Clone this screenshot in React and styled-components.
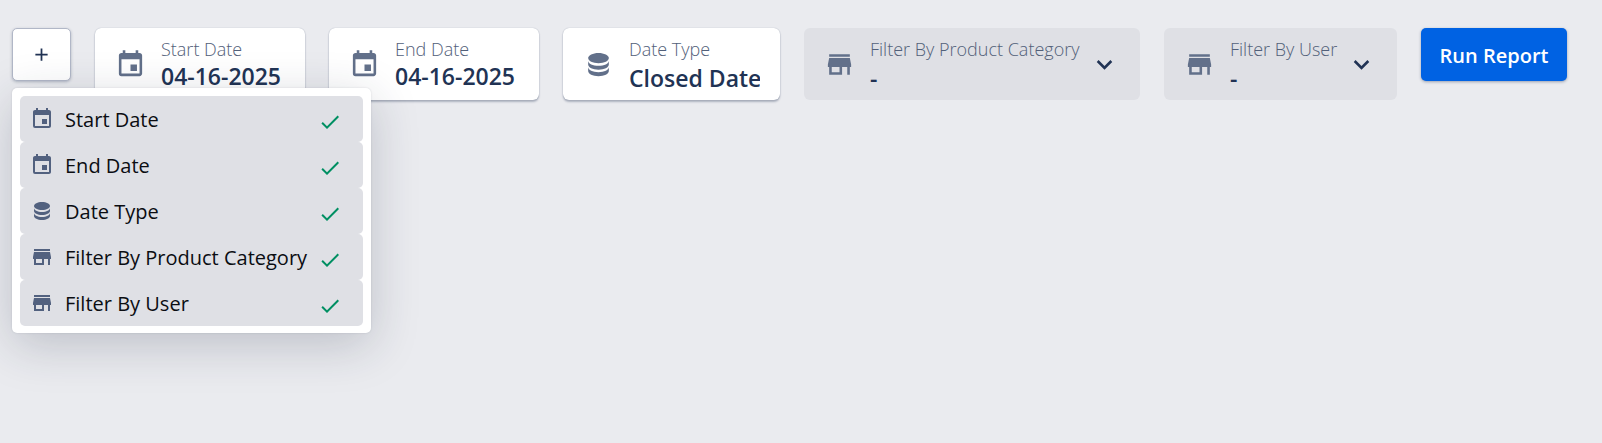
import styled, { createGlobalStyle } from "styled-components";
import { useState } from "react";
import {
  MdAdd,
  MdCheck,
  MdEvent,
  MdKeyboardArrowDown,
  MdStore,
} from "react-icons/md";

const GlobalStyle = createGlobalStyle`
  * {
    box-sizing: border-box;
  }

  body {
    margin: 0;
    background-color: #eaebef;
    font-family: "Open Sans", "Noto Sans", sans-serif;
  }

  button,
  input,
  select {
    font-family: inherit;
  }
`;

const Page = styled.main`
  min-height: 100vh;
`;

const Toolbar = styled.div`
  display: flex;
  align-items: flex-start;
  gap: 24px;
  padding: 28px 12px;
`;

const AddArea = styled.div`
  position: relative;
  flex: none;
`;

const AddButton = styled.button`
  display: flex;
  align-items: center;
  justify-content: center;
  width: 59px;
  height: 53px;
  padding: 0;
  border: 1px solid #b1b7c7;
  border-radius: 5px;
  background-color: #fff;
  box-shadow: 0 1px 3px rgba(33, 51, 84, 0.3);
  color: #213354;
  font-size: 21px;
  cursor: pointer;
`;

const Menu = styled.div`
  position: absolute;
  z-index: 1;
  top: 60px;
  left: 0;
  width: 359px;
  padding: 8px 8px 7px;
  border-radius: 5px;
  background-color: #fff;
  box-shadow: 0 12px 48px rgba(33, 40, 64, 0.22), 0 0 2px rgba(33, 40, 64, 0.15);
`;

const MenuItem = styled.button`
  display: flex;
  align-items: center;
  width: 100%;
  height: 46px;
  padding: 0 21px 0 10px;
  border: none;
  border-radius: 5px;
  background-color: #dfe0e5;
  color: #0b0d12;
  font-size: 20px;
  text-align: left;
  white-space: nowrap;
  cursor: pointer;
`;

const MenuIcon = styled.span`
  display: flex;
  flex: none;
  margin-right: 11px;
  color: #52617f;
  font-size: 24px;
`;

const MenuLabel = styled.span`
  flex: 1;
  min-width: 0;
`;

const Check = styled(MdCheck)`
  flex: none;
  margin-top: 5px;
  color: #008f62;
  font-size: 24px;
`;

const Card = styled.label`
  display: flex;
  align-items: center;
  flex: 0 1 ${(props) => props.$width}px;
  min-width: 0;
  height: 72px;
  padding: 0 20px;
  border-radius: 6px;
  background-color: ${(props) => (props.$empty ? "#dfe0e5" : "#fff")};
  box-shadow: ${(props) =>
    props.$empty
      ? "none"
      : "0 0 1px rgba(33, 51, 84, 0.4), 0 2px 2px rgba(33, 51, 84, 0.3)"};
`;

const CardIcon = styled.span`
  display: flex;
  flex: none;
  margin-right: 15px;
  color: #62708a;
  font-size: 31px;
`;

const CardText = styled.span`
  display: flex;
  flex: 1;
  flex-direction: column;
  min-width: 0;
  padding-bottom: 2px;
`;

const CardLabel = styled.span`
  color: #526079;
  font-size: 18px;
  font-weight: 300;
  line-height: 26px;
  white-space: nowrap;
`;

const CardInput = styled.input`
  width: 100%;
  height: 28px;
  padding: 0;
  border: none;
  outline: none;
  background: none;
  color: #213354;
  font-size: 23px;
  font-weight: 600;
`;

const CardSelect = styled(CardInput)`
  appearance: none;
`;

const Arrow = styled(MdKeyboardArrowDown)`
  flex: none;
  color: #213354;
  font-size: 31px;
`;

const RunButton = styled.button`
  flex: none;
  width: 146px;
  height: 53px;
  padding: 2px 0 0;
  border: none;
  border-radius: 5px;
  background-color: #0062e3;
  box-shadow: 0 1px 3px rgba(33, 51, 84, 0.4);
  color: #fff;
  font-size: 20px;
  font-weight: 600;
  white-space: nowrap;
  cursor: pointer;
`;

function DatabaseIcon() {
  return (
    <svg viewBox="0 0 24 24" width="1em" height="1em" fill="currentColor">
      <path d="M12 3C7.58 3 4 4.79 4 7s3.58 4 8 4 8-1.79 8-4-3.58-4-8-4z" />
      <path d="M4 9v3c0 2.21 3.58 4 8 4s8-1.79 8-4V9c0 2.21-3.58 4-8 4s-8-1.79-8-4z" />
      <path d="M4 14v3c0 2.21 3.58 4 8 4s8-1.79 8-4v-3c0 2.21-3.58 4-8 4s-8-1.79-8-4z" />
    </svg>
  );
}

const filters = [
  { id: "start", label: "Start Date", icon: MdEvent, type: "date", value: "04-16-2025", width: 210 },
  { id: "end", label: "End Date", icon: MdEvent, type: "date", value: "04-16-2025", width: 210 },
  { id: "type", label: "Date Type", icon: DatabaseIcon, type: "select", value: "Closed Date", width: 217 },
  { id: "category", label: "Filter By Product Category", icon: MdStore, type: "filter", value: "-", width: 336 },
  { id: "user", label: "Filter By User", icon: MdStore, type: "filter", value: "-", width: 233 },
];

export default function App() {
  const [open, setOpen] = useState(true);
  const [active, setActive] = useState(filters.map((item) => item.id));

  const handleToggle = (id) => {
    setActive(
      active.includes(id) ? active.filter((a) => a !== id) : [...active, id]
    );
  };

  return (
    <Page>
      <GlobalStyle />
      <Toolbar>
        <AddArea>
          <AddButton aria-label="Add filter" onClick={() => setOpen(!open)}>
            <MdAdd />
          </AddButton>
          {open && (
            <Menu role="menu">
              {filters.map((item) => (
                <MenuItem
                  key={item.id}
                  role="menuitemcheckbox"
                  aria-checked={active.includes(item.id)}
                  onClick={() => handleToggle(item.id)}
                >
                  <MenuIcon>
                    <item.icon />
                  </MenuIcon>
                  <MenuLabel>{item.label}</MenuLabel>
                  {active.includes(item.id) && <Check />}
                </MenuItem>
              ))}
            </Menu>
          )}
        </AddArea>

        {filters
          .filter((item) => active.includes(item.id))
          .map((item) => (
            <Card key={item.id} $width={item.width} $empty={item.value === "-"}>
              <CardIcon>
                <item.icon />
              </CardIcon>
              <CardText>
                <CardLabel>{item.label}</CardLabel>
                {item.type === "date" ? (
                  <CardInput type="text" defaultValue={item.value} />
                ) : (
                  <CardSelect as="select" defaultValue={item.value}>
                    <option>{item.value}</option>
                  </CardSelect>
                )}
              </CardText>
              {item.type === "filter" && <Arrow />}
            </Card>
          ))}

        <RunButton>Run Report</RunButton>
      </Toolbar>
    </Page>
  );
}
